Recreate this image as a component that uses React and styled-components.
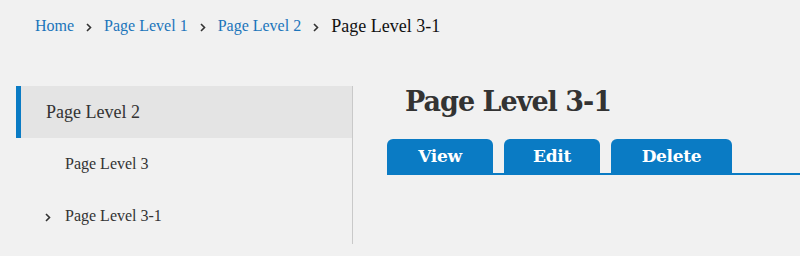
import React from "react";
import styled, { createGlobalStyle } from "styled-components";

const GlobalStyle = createGlobalStyle`
  body {
    margin: 0;
    background: #f1f1f1;
    font-family: "Liberation Serif", "Times New Roman", serif;
  }
`;

const Page = styled.div`
  width: 800px;
  height: 256px;
  overflow: hidden;
`;

const Breadcrumb = styled.nav`
  display: flex;
  align-items: center;
  height: 52px;
  padding-left: 35px;
  font-size: 16px;
`;

const Crumb = styled.a`
  color: ${(props) => (props.current ? "#111" : "#1b75bb")};
  font-size: ${(props) => (props.current ? "18px" : "16px")};
  text-decoration: none;
`;

const Sep = styled.svg`
  width: 6px;
  height: 9px;
  margin: ${(props) => props.m || "2px 12px 0"};
  flex-shrink: 0;
`;

const Main = styled.div`
  display: flex;
  margin-top: 34px;
`;

const Sidebar = styled.ul`
  list-style: none;
  margin: 0 0 0 16px;
  padding: 0 0 2px;
  width: 336px;
  border-right: 1px solid #c9c9c9;
`;

const NavItem = styled.li`
  display: flex;
  align-items: center;
  height: 52px;
  box-sizing: border-box;
  padding-left: ${(props) => (props.active ? "25px" : "49px")};
  border-left: ${(props) => (props.active ? "5px solid #0a7bc4" : "none")};
  background: ${(props) => (props.active ? "#e4e4e4" : "transparent")};
  color: #333;
  font-size: ${(props) => (props.active ? "18px" : "16px")};
`;

const Content = styled.section`
  flex: 1;
  padding-left: 34px;
`;

const Heading = styled.h1`
  margin: 0 0 0 18px;
  height: 53px;
  font-family: "DejaVu Serif", serif;
  font-weight: bold;
  font-size: 27px;
  line-height: 32px;
  color: #333;
  letter-spacing: -1px;
`;

const Tabs = styled.div`
  display: flex;
  gap: 11px;
  border-bottom: 2px solid #0a7bc4;
`;

const Tab = styled.button`
  width: ${(props) => props.w}px;
  height: 34px;
  padding: 0;
  border: none;
  border-radius: 6px 6px 0 0;
  background: #0a7bc4;
  color: #fff;
  font-family: "DejaVu Serif", serif;
  font-weight: bold;
  font-size: 17px;
  letter-spacing: -0.3px;
`;

const Chevron = ({ m }) => (
  <Sep m={m} viewBox="0 0 6 9">
    <path d="M1 1 L4.5 4.5 L1 8" fill="none" stroke="#333" strokeWidth="1.6" />
  </Sep>
);

const crumbs = ["Home", "Page Level 1", "Page Level 2"];
const tabs = [
  { label: "View", w: 106 },
  { label: "Edit", w: 96 },
  { label: "Delete", w: 121 },
];

const App = () => {
  return (
    <Page>
      <GlobalStyle />
      <Breadcrumb>
        {crumbs.map((c) => (
          <React.Fragment key={c}>
            <Crumb href="#">{c}</Crumb>
            <Chevron />
          </React.Fragment>
        ))}
        <Crumb current>Page Level 3-1</Crumb>
      </Breadcrumb>
      <Main>
        <Sidebar>
          <NavItem active>Page Level 2</NavItem>
          <NavItem>Page Level 3</NavItem>
          <NavItem>
            <Chevron m="2px 14px 0 -20px" />
            Page Level 3-1
          </NavItem>
        </Sidebar>
        <Content>
          <Heading>Page Level 3-1</Heading>
          <Tabs>
            {tabs.map((t) => (
              <Tab key={t.label} w={t.w}>
                {t.label}
              </Tab>
            ))}
          </Tabs>
        </Content>
      </Main>
    </Page>
  );
};

export default App;
